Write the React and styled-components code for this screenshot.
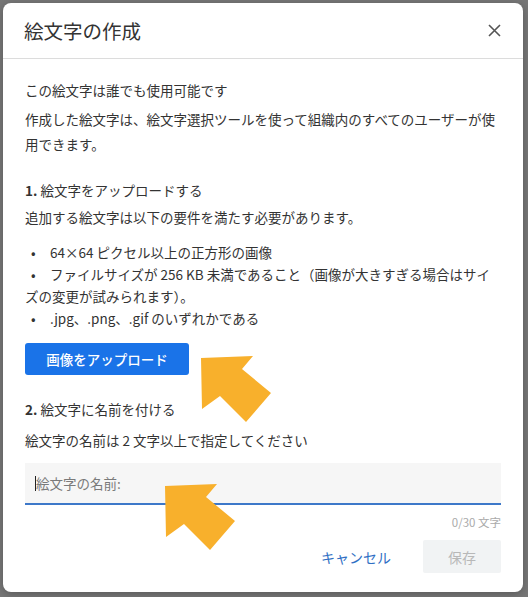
import React from "react";
import styled, { createGlobalStyle } from "styled-components";

const Global = createGlobalStyle`
  html, body { margin: 0; padding: 0; background: #777777; }
  body { font-family: "Noto Sans CJK JP", "Noto Sans", sans-serif; }
  *, *::before, *::after { box-sizing: border-box; }
`;

const Page = styled.div`
  position: relative;
  width: 528px;
  height: 597px;
  padding: 3px 0 0 3px;
  overflow: hidden;
  background: #777777;
`;

const Dialog = styled.div`
  width: 520px;
  background: #ffffff;
  border-radius: 8px;
  box-shadow: 0 2px 8px rgba(0, 0, 0, 0.25);
  display: flex;
  flex-direction: column;
  color: #333333;
`;

const Header = styled.div`
  height: 56px;
  display: flex;
  align-items: center;
  justify-content: space-between;
  padding: 0 22px 0 21px;
  border-bottom: 1px solid #dcdcdc;
`;

const Title = styled.h1`
  margin: 0;
  font-size: 19.5px;
  font-weight: 400;
  color: #333333;
  line-height: 26px;
`;

const CloseButton = styled.button`
  width: 14px;
  height: 14px;
  padding: 0;
  border: none;
  background: none;
  display: flex;
  align-items: center;
  justify-content: center;
  color: #555555;
`;

const Body = styled.div`
  padding: 20px 22px 19px 22px;
  display: flex;
  flex-direction: column;
  font-size: 13.5px;
`;

const Text = styled.p`
  margin: ${(p) => p.$mt || 0}px 0 0;
  line-height: ${(p) => p.$lh || 22}px;
  color: #333333;
`;

const Step = styled.span`
  font-weight: 700;
`;

const List = styled.ul`
  margin: 13px 0 0;
  padding: 0;
  list-style: none;
`;

const Item = styled.li`
  line-height: 22px;
  color: #333333;
  &::before {
    content: "•";
    display: inline-block;
    width: 25px;
    padding-left: 6px;
  }
`;

const UploadButton = styled.button`
  margin-top: 14px;
  align-self: flex-start;
  width: 164px;
  height: 32px;
  border: none;
  border-radius: 3px;
  background: #1a73e8;
  color: #ffffff;
  font-family: inherit;
  font-size: 13.5px;
  font-weight: 500;
`;

const Field = styled.div`
  margin-top: 12px;
  height: 42px;
  background: #f6f6f6;
  border-bottom: 2px solid #3d78c9;
  display: flex;
  align-items: center;
  padding: 0 10px;
`;

const Caret = styled.span`
  width: 1px;
  height: 15px;
  background: #222222;
`;

const Placeholder = styled.span`
  color: #7a7a7a;
  font-size: 13.5px;
`;

const Counter = styled.div`
  margin-top: 9px;
  text-align: right;
  font-size: 11.5px;
  line-height: 16px;
  color: #aaaaaa;
`;

const Footer = styled.div`
  margin-top: 10px;
  display: flex;
  justify-content: flex-end;
  align-items: center;
  gap: 16px;
`;

const TextButton = styled.button`
  border: none;
  padding: 0 16px;
  height: 33px;
  font-family: inherit;
  font-size: 14px;
  color: ${(p) => (p.$disabled ? "#b8b8b8" : "#2f6fc4")};
  background: ${(p) => (p.$disabled ? "#f1f3f4" : "transparent")};
  width: ${(p) => (p.$w ? p.$w + "px" : "auto")};
  border-radius: 2px;
`;

const Arrow = styled.svg`
  position: absolute;
  left: ${(p) => p.$x}px;
  top: ${(p) => p.$y}px;
  pointer-events: none;
`;

const ArrowShape = ({ x, y }) => (
  <Arrow $x={x} $y={y} width="72" height="68" viewBox="0 0 72 68">
    <polygon points="0,2 52,0 41,13 70,37 45,66 19,40 1,53" fill="#f8b02c" />
  </Arrow>
);

export default function App() {
  return (
    <>
      <Global />
      <Page>
        <Dialog>
          <Header>
            <Title>絵文字の作成</Title>
            <CloseButton aria-label="閉じる">
              <svg width="13" height="13" viewBox="0 0 13 13">
                <path d="M1 1 L12 12 M12 1 L1 12" stroke="#555" strokeWidth="1.6" fill="none" />
              </svg>
            </CloseButton>
          </Header>
          <Body>
            <Text>この絵文字は誰でも使用可能です</Text>
            <Text $mt={6} $lh={25}>
              作成した絵文字は、絵文字選択ツールを使って組織内のすべてのユーザーが使用できます。
            </Text>
            <Text $mt={22}>
              <Step>1.</Step> 絵文字をアップロードする
            </Text>
            <Text $mt={5}>追加する絵文字は以下の要件を満たす必要があります。</Text>
            <List>
              <Item>64×64 ピクセル以上の正方形の画像</Item>
              <Item>
                ファイルサイズが 256 KB 未満であること（画像が大きすぎる場合はサイズの変更が試みられます）。
              </Item>
              <Item>.jpg、.png、.gif のいずれかである</Item>
            </List>
            <UploadButton>画像をアップロード</UploadButton>
            <Text $mt={23}>
              <Step>2.</Step> 絵文字に名前を付ける
            </Text>
            <Text $mt={9}>絵文字の名前は 2 文字以上で指定してください</Text>
            <Field>
              <Caret />
              <Placeholder>絵文字の名前:</Placeholder>
            </Field>
            <Counter>0/30 文字</Counter>
            <Footer>
              <TextButton>キャンセル</TextButton>
              <TextButton $disabled $w={78}>保存</TextButton>
            </Footer>
          </Body>
        </Dialog>
        <ArrowShape x={201} y={356} />
        <ArrowShape x={165} y={484} />
      </Page>
    </>
  );
}
